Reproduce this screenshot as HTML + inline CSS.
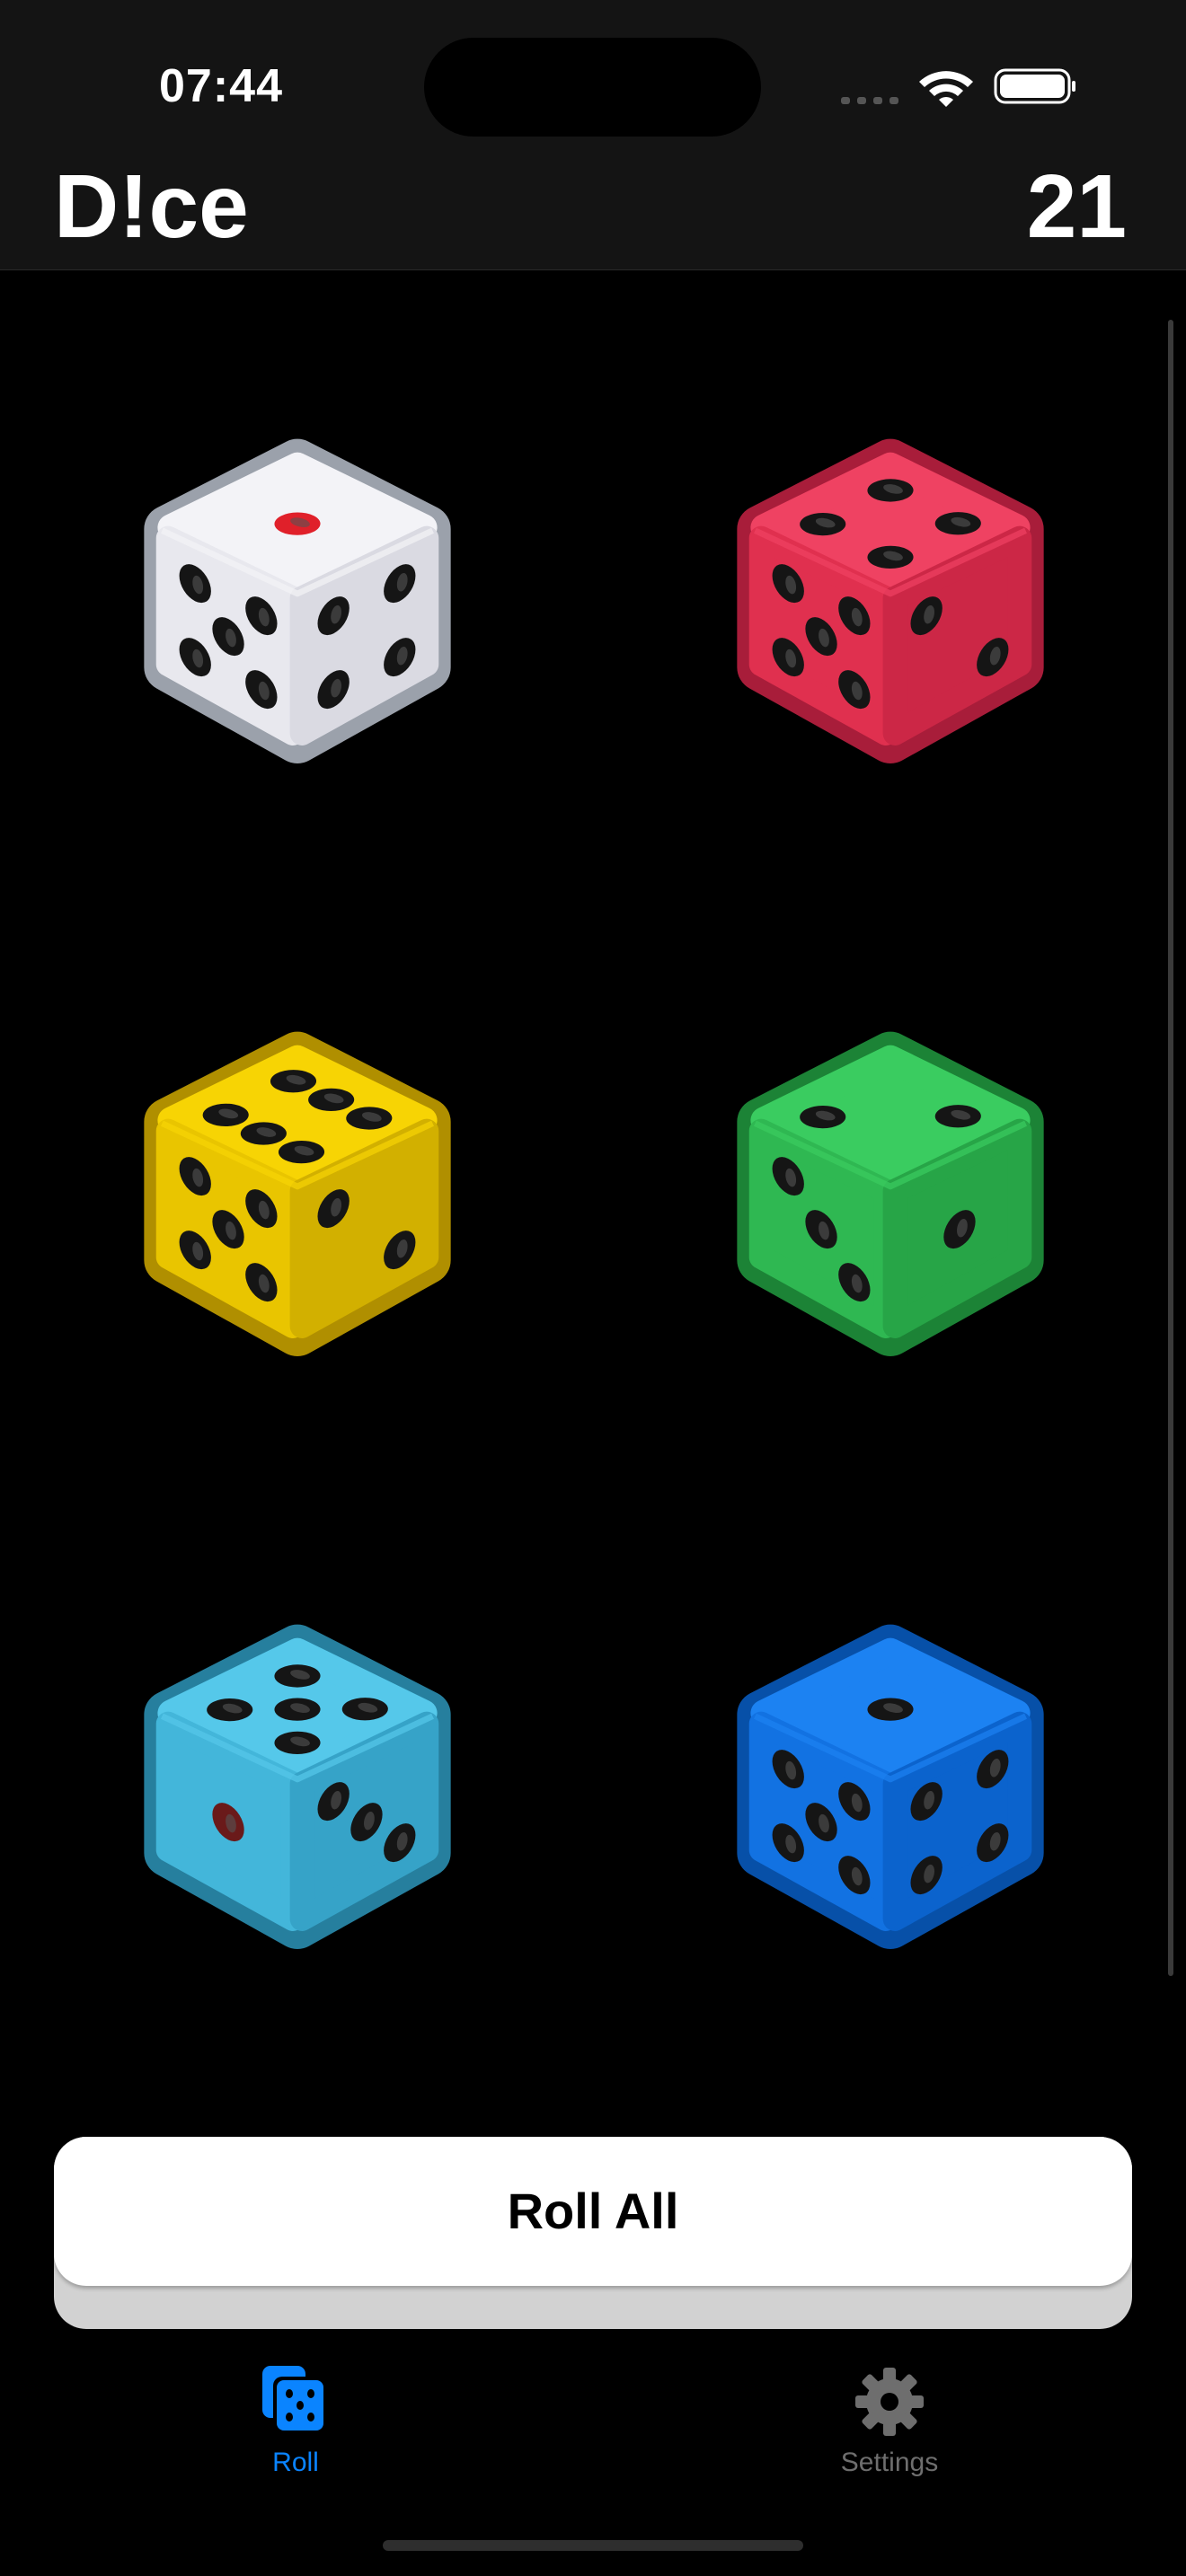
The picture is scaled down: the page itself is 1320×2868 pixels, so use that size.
<!DOCTYPE html>
<html><head><meta charset="utf-8">
<style>
html,body{margin:0;padding:0;background:#000;}
body{width:1320px;height:2868px;position:relative;overflow:hidden;font-family:"Liberation Sans",sans-serif;}
.hdr{position:absolute;left:0;top:0;width:1320px;height:300px;background:#141414;border-bottom:1px solid #2a2a2a;}
.time{position:absolute;left:177px;top:66px;font-size:52px;font-weight:bold;color:#fff;letter-spacing:1px;}
.island{position:absolute;left:472px;top:42px;width:375px;height:110px;border-radius:55px;background:#000;}
.title{position:absolute;left:60px;top:180px;font-size:100px;font-weight:bold;color:#fff;line-height:1;}
.score{position:absolute;right:66px;top:180px;font-size:100px;font-weight:bold;color:#fff;line-height:1;}
.scroll{position:absolute;left:1300px;top:356px;width:6px;height:1844px;border-radius:3px;background:#3a3a3a;}
.die{position:absolute;width:348px;height:366px;}
.btnbase{position:absolute;left:60px;top:2379px;width:1200px;height:214px;border-radius:36px;background:#d2d2d2;}
.btn{position:absolute;left:60px;top:2379px;width:1200px;height:166px;border-radius:36px;background:#fff;box-shadow:0 3px 4px rgba(0,0,0,.25);text-align:center;line-height:166px;font-size:56px;font-weight:bold;color:#000;}
.tablbl{position:absolute;top:2725px;font-size:30px;width:200px;text-align:center;}
.home{position:absolute;left:426px;top:2828px;width:468px;height:12px;border-radius:6px;background:#2e2e2e;}
</style></head><body>
<div class="hdr">
  <div class="time">07:44</div>
  <div class="island"></div>
  <svg style="position:absolute;left:930px;top:70px" width="280" height="60" viewBox="0 0 280 60">
    <g fill="#555"><rect x="6" y="38" width="10" height="8" rx="3"/><rect x="24" y="38" width="10" height="8" rx="3"/><rect x="42" y="38" width="10" height="8" rx="3"/><rect x="60" y="38" width="10" height="8" rx="3"/></g>
    <g fill="#fff" transform="translate(123,30)">
      <path d="M-30,-9 A44,44 0 0 1 30,-9 L24,-3 A35,35 0 0 0 -24,-3 Z"/>
      <path d="M-19,1 A28,28 0 0 1 19,1 L13,7 A19,19 0 0 0 -13,7 Z"/>
      <path d="M-8,11 A12,12 0 0 1 8,11 L0,19 Z"/>
    </g>
    <rect x="178" y="8" width="82" height="36" rx="11" fill="none" stroke="#fff" stroke-width="3"/>
    <rect x="183" y="13" width="72" height="26" rx="7" fill="#fff"/>
    <rect x="263" y="20" width="4" height="12" rx="2" fill="#fff"/>
  </svg>
  <div class="title">D!ce</div>
  <div class="score">21</div>
</div>
<div class="scroll"></div>
<div id="dice"></div>
<div class="btnbase"></div>
<div class="btn">Roll All</div>
<svg style="position:absolute;left:290px;top:2632px" width="80" height="80" viewBox="0 0 80 80">
  <rect x="2" y="2" width="48" height="58" rx="9" fill="#0a84ff"/>
  <rect x="14" y="14" width="58" height="62" rx="10" fill="#000"/>
  <rect x="18" y="18" width="52" height="56" rx="8" fill="#0a84ff"/>
  <g fill="#000"><ellipse cx="32" cy="33" rx="4" ry="5"/><ellipse cx="56" cy="33" rx="4" ry="5"/><ellipse cx="44" cy="46" rx="4" ry="5"/><ellipse cx="32" cy="59" rx="4" ry="5"/><ellipse cx="56" cy="59" rx="4" ry="5"/></g>
</svg>
<div class="tablbl" style="left:229px;color:#0a84ff">Roll</div>
<svg style="position:absolute;left:950px;top:2634px" width="80" height="80" viewBox="-40 -40 80 80">
  <g fill="#6e6e6e">
    <circle r="26"/>
    <g id="t"><rect x="-7" y="-38" width="14" height="16" rx="3"/></g>
    <use href="#t" transform="rotate(45)"/><use href="#t" transform="rotate(90)"/><use href="#t" transform="rotate(135)"/>
    <use href="#t" transform="rotate(180)"/><use href="#t" transform="rotate(225)"/><use href="#t" transform="rotate(270)"/><use href="#t" transform="rotate(315)"/>
  </g>
  <circle r="10" fill="#000"/>
</svg>
<div class="tablbl" style="left:890px;color:#6e6e6e">Settings</div>
<div class="home"></div>
<script>
var P={1:[[.5,.5]],2:[[.25,.25],[.75,.75]],3:[[.25,.25],[.5,.5],[.75,.75]],4:[[.25,.25],[.75,.25],[.25,.75],[.75,.75]],5:[[.25,.25],[.75,.25],[.5,.5],[.25,.75],[.75,.75]],6:[[.25,.22],[.25,.5],[.25,.78],[.75,.22],[.75,.5],[.75,.78]]};
var dice=[
 [331,671,['#f3f3f7','#e8e8ee','#dadae2','#9ba1ab'],1,5,4,'#e0202a'],
 [991,671,['#ef4262','#e0304f','#cc2746','#a81d3a'],4,5,2],
 [331,1331,['#f7d404','#e9c500','#d2b000','#b08f00'],6,5,2],
 [991,1331,['#3acc60','#2fb852','#27a547','#1c8336'],2,3,1],
 [331,1991,['#55c8ea','#43b6da','#36a3c8','#267f9e'],5,1,3,null,'#6a1a1a'],
 [991,1991,['#1c82f2','#1272e2','#0b63cd','#0750a8'],1,5,4]
];
function pips(face,n,col){
 var s='<g transform="matrix('+face.join(',')+')">';
 P[n].forEach(function(p){s+='<ellipse cx="'+p[0]+'" cy="'+p[1]+'" rx="0.12" ry="0.12" fill="'+col+'"/><ellipse cx="'+(p[0]+0.02)+'" cy="'+p[1]+'" rx="0.04" ry="0.06" fill="#555" opacity=".6"/>';});
 return s+'</g>';
}
var h='';
dice.forEach(function(d){
 var c=d[2];
 var s='<svg class="die" style="left:'+(d[0]-174)+'px;top:'+(d[1]-183)+'px" viewBox="-4 -4 208 218">';
 s+='<path d="M100,12 L186,56 L186,148 L100,196 L14,148 L14,56 Z" fill="'+c[3]+'" stroke="'+c[3]+'" stroke-width="32" stroke-linejoin="round"/>';
 s+='<path d="M100,14 L184,55 L100,97 L16,55 Z" fill="'+c[0]+'" stroke="'+c[0]+'" stroke-width="18" stroke-linejoin="round"/>';
 s+='<path d="M14,62 L97,102 L97,192 L14,146 Z" fill="'+c[1]+'" stroke="'+c[1]+'" stroke-width="16" stroke-linejoin="round"/>';
 s+='<path d="M186,62 L103,102 L103,192 L186,146 Z" fill="'+c[2]+'" stroke="'+c[2]+'" stroke-width="16" stroke-linejoin="round"/>';
 s+='<path d="M10,57 L100,99 L190,57" fill="none" stroke="'+c[0]+'" stroke-width="4" stroke-linejoin="round" opacity=".7"/>';
 s+=pips([90,-45,90,44,10,53],d[3],d[6]&&d[3]==1?d[6]:'#151515');
 s+=pips([88,43,0,98,10,57],d[4],d[7]&&d[4]==1?d[7]:'#151515');
 s+=pips([88,-43,0,98,102,100],d[5],'#151515');
 s+='</svg>';h+=s;
});
document.getElementById('dice').innerHTML=h;
</script>
</body></html>
